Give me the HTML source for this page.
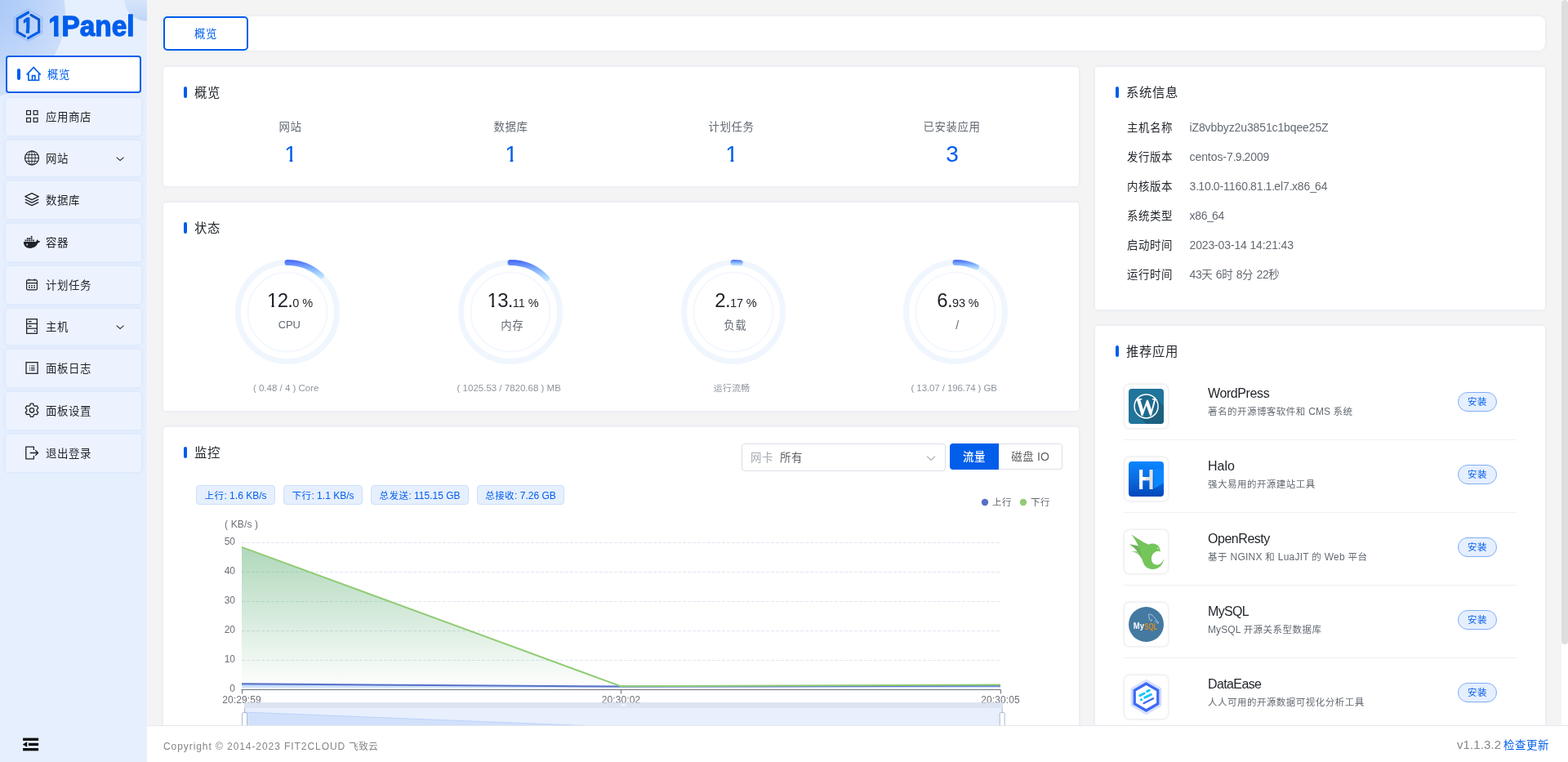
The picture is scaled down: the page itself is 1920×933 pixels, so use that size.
<!DOCTYPE html>
<html lang="zh-CN">
<head>
<meta charset="utf-8">
<title>1Panel</title>
<style>
*{box-sizing:border-box;margin:0;padding:0}
html,body{width:1920px;height:933px;overflow:hidden}
body{font-family:"Liberation Sans","Noto Sans CJK SC",sans-serif;font-size:14px;color:#1f2329;background:#f4f4f4;position:relative}
svg{display:block;overflow:visible}
.abs{position:absolute}
/* sidebar */
#side{position:absolute;left:0;top:0;width:180px;height:933px;background:#e6effd;overflow:hidden;will-change:transform}
#side .deco1{position:absolute;left:-126px;top:-86px;width:206px;height:206px;border-radius:50%;background:radial-gradient(circle at 50% 40%,#a3c4f7 0%,#b6d0f9 35%,#cfe0fb 75%,#d9e7fc 100%)}
#side .deco2{position:absolute;left:152px;top:-30px;width:56px;height:56px;border-radius:50%;background:linear-gradient(180deg,#e3edfd 30%,#bfd6f8 100%)}
#logo{position:absolute;left:0;top:0}
.mi{position:absolute;left:7px;width:166px;height:46px;border-radius:4px;background:#edf3fe;box-shadow:0 0 4px rgba(0,94,235,.10);color:#1f2329;font-size:14px}
.mi.sub{height:45px}
.mi .t{position:absolute;left:49px;top:0;line-height:46px;white-space:nowrap}
.mi.sub .t{line-height:45px}
.mi svg.ic{position:absolute;left:23px;top:13px;width:20px;height:20px}
.mi svg.arr{position:absolute;left:134px;top:17px;width:12px;height:12px}
.mi.act{background:#fff;border:2px solid #005eeb;color:#005eeb;box-shadow:none}
.mi.act .t{left:49px;line-height:42px}
.mi.act svg.ic{left:23px;top:11px}
.mi.act .bar{position:absolute;left:12px;top:14px;width:4px;height:14px;border-radius:2px;background:#005eeb}
/* cards */
.card{position:absolute;background:#fff;border-radius:4px;box-shadow:0 0 4px rgba(0,94,235,.10);will-change:transform}
.hd{position:absolute;left:38px;font-size:16px;line-height:22px;color:#1f2329;white-space:nowrap}
.hd:before{content:"";position:absolute;left:-13px;top:3px;width:4px;height:14px;border-radius:2px;background:#005eeb}
.c{position:absolute;white-space:nowrap;transform:translateX(-50%);text-align:center}
.l{position:absolute;white-space:nowrap}
.n1{display:inline-block;line-height:1;clip-path:polygon(0 -.5em,1em -.5em,1em .6em,.36em .6em,.36em 1.5em,.23em 1.5em,.23em .6em,0 .6em)}
.k{font-size:.96em;letter-spacing:.04em;vertical-align:.03em}
.g{color:#646a73}
.g2{color:#8f959e}
.b{color:#005eeb}
.f12{font-size:12px;line-height:16px}
.f14{font-size:14px;line-height:20px}
.f16{font-size:16px;line-height:22px}
#tabs{left:200px;top:20px;width:1692px;height:42px;border-radius:8px}
#tabs .tab{position:absolute;left:0;top:0;width:104px;height:42px;border:2px solid #005eeb;border-radius:5px;background:#fff;color:#005eeb;font-size:14px;line-height:38px;text-align:center}
.tag{position:absolute;top:71px;height:24px;border:1px solid #ccdffb;background:#e6effd;border-radius:4px;color:#005eeb;font-size:12px;line-height:24px;text-align:center;white-space:nowrap}
.sel{position:absolute;left:708px;top:20px;width:250px;height:34px;border:1px solid #dcdfe6;border-radius:4px;background:#fff}
.rb{position:absolute;top:20px;height:32px;font-size:14px;line-height:30px;text-align:center;white-space:nowrap}
.app{position:absolute;left:0;width:551px;height:89px}
.app .ib{position:absolute;left:36px;top:0.5px;width:53px;height:53.5px;border-radius:6px;background:#fff;box-shadow:0 0 3.5px rgba(31,35,41,.20)}
.app .ib svg{position:absolute;left:5px;top:5.5px;width:43px;height:43px}
.app .nm{position:absolute;left:138px;top:1px;font-size:16px;line-height:22px;white-space:nowrap;color:#1f2329}
.app .ds{position:absolute;left:138px;top:26px;font-size:12px;line-height:16px;white-space:nowrap;color:#646a73}
.app .bt{position:absolute;left:444px;top:10px;width:48px;height:24px;border-radius:12px;border:1px solid #80aef5;background:#e6effd;color:#005eeb;font-size:12px;line-height:22px;text-align:center}
.app .dv{position:absolute;left:35px;top:68px;width:481px;height:1px;background:#eef0f3}
#foot{will-change:transform;position:absolute;left:180px;top:888px;width:1740px;height:45px;background:#fff;border-top:1px solid #e4e7ed;font-size:13px;color:#858585}
#sbt{position:absolute;left:1912px;top:0;width:8px;height:888px;background:#fff}
#sb{position:absolute;left:1912px;top:0;width:8px;height:789px;background:#dddee0;border-radius:4px}
</style>
</head>
<body>

<div id="side">
  <div class="deco1"></div><div class="deco2"></div>
  <svg id="logo" width="180" height="62" viewBox="0 0 180 62">
    <polygon points="34.5,11.2 51.8,21.1 51.8,40.9 34.5,50.8 17.2,40.9 17.2,21.1" fill="none" stroke="#8db7f7" stroke-width="0.9"/>
    <polygon points="34.5,12.6 50.6,21.8 50.6,40.2 34.5,49.4 18.4,40.2 18.4,21.8" fill="none" stroke="#9cc1f8" stroke-width="0.6"/>
    <path d="M34.6 15.4 L21.2 23 L21.2 39 L30.4 44.3" fill="none" stroke="#0a59d8" stroke-width="3.1" stroke-linejoin="miter" stroke-linecap="round"/>
    <path d="M34.6 15.4 L24 21.4" fill="none" stroke="#0560e8" stroke-width="3.1" stroke-linecap="round"/>
    <path d="M38 18.4 L47.7 23.9 L47.7 39.1" fill="none" stroke="#0b56cc" stroke-width="3.1" stroke-linejoin="miter" stroke-linecap="round"/>
    <path d="M47.7 39.1 L34.5 46.7" fill="none" stroke="#0560e8" stroke-width="3.1" stroke-linecap="round"/>
    <mask id="lm1" maskUnits="userSpaceOnUse" x="0" y="0" width="180" height="62"><rect width="180" height="62" fill="#fff"/><rect x="24" y="35.5" width="7.75" height="8" fill="#000"/><rect x="36.05" y="35.5" width="8" height="8" fill="#000"/></mask>
    <mask id="lm2" maskUnits="userSpaceOnUse" x="0" y="0" width="180" height="62"><rect width="180" height="62" fill="#fff"/><rect x="57" y="38.8" width="9.05" height="8" fill="#000"/><rect x="71.65" y="38.8" width="5.2" height="8" fill="#000"/></mask>
    <text x="27.9" y="39.6" font-family="'Liberation Sans',sans-serif" font-weight="700" font-size="25.5" fill="#0560e6" stroke="#0560e6" stroke-width="1.5" stroke-linejoin="round" textLength="11.6" lengthAdjust="spacingAndGlyphs" mask="url(#lm1)">1</text>
    <text y="44.2" font-family="'Liberation Sans',sans-serif" font-weight="700" font-size="35" fill="#005eeb" stroke="#005eeb" stroke-width="1.3" stroke-linejoin="round" mask="url(#lm2)"><tspan x="59.55" textLength="17.11" lengthAdjust="spacingAndGlyphs">1</tspan><tspan x="75.62" textLength="88.89" lengthAdjust="spacingAndGlyphs">Panel</tspan></text>
  </svg>

  <div class="mi act" style="top:68px"><span class="bar"></span>
    <svg class="ic" viewBox="0 0 20 20" fill="none" stroke="#005eeb" stroke-width="1.6" stroke-linejoin="miter"><path d="M0.6 10.6 L9.2 1.4 L17.8 10.6"/><path d="M2.9 9 V17.2 H15.5 V9"/><path d="M7.5 17.2 V11.6 H10.9 V17.2"/></svg>
    <span class="t"><span class="k">概览</span></span></div>

  <div class="mi" style="top:120px">
    <svg class="ic" viewBox="0 0 20 20" fill="none" stroke="#1f2329" stroke-width="1.2"><rect x="2.6" y="2.5" width="4.8" height="4.8"/><rect x="11.2" y="2.5" width="4.8" height="4.8"/><rect x="2.6" y="11.5" width="4.8" height="4.8"/><rect x="11.2" y="11.5" width="4.8" height="4.8"/></svg>
    <span class="t"><span class="k">应用商店</span></span></div>

  <div class="mi sub" style="top:172px;height:44px">
    <svg class="ic" viewBox="0 0 20 20" fill="none" stroke="#1f2329" stroke-width="1.2"><circle cx="9" cy="8.4" r="8.5"/><ellipse cx="9" cy="8.4" rx="4.2" ry="8.5" stroke-width="0.9"/><path d="M9 0 V16.9 M0.6 8.4 H17.4 M1.9 4.4 H16.1 M1.9 12.4 H16.1" stroke-width="0.9"/></svg>
    <span class="t" style="line-height:44px"><span class="k">网站</span></span>
    <svg class="arr" viewBox="0 0 12 12" fill="none" stroke="#303133" stroke-width="1.1"><path d="M1.7 3.6 L6.1 7.5 L10.5 3.6"/></svg></div>

  <div class="mi" style="top:222px">
    <svg class="ic" viewBox="0 0 20 20" fill="none" stroke="#1f2329" stroke-width="1.3" stroke-linejoin="round"><path d="M9 1.6 L17.2 5.6 L9 9.6 L0.8 5.6 Z"/><path d="M0.8 9.2 L9 13.2 L17.2 9.2"/><path d="M0.8 12.6 L9 16.6 L17.2 12.6"/></svg>
    <span class="t"><span class="k">数据库</span></span></div>

  <div class="mi" style="top:274px">
    <svg class="ic" viewBox="0 0 20 20" fill="#1f2329" stroke="none"><path d="M-0.9 8.9 H14.3 C14.5 7.7 15 6.9 15.9 6.2 C16.5 6.8 16.8 7.5 16.9 8.2 C17.8 8 18.6 8.2 19.2 8.6 C18.8 9.6 17.9 10.2 16.6 10.3 C15.2 14 12 16.9 6.7 16.9 C2.4 16.9 -0.3 14.7 -1 10.8 C-1.1 10.1 -1.1 9.5 -0.9 8.9 Z"/><rect x="0.5" y="6.5" width="1.8" height="1.8"/><rect x="2.9" y="6.5" width="1.8" height="1.8"/><rect x="5.3" y="6.5" width="1.8" height="1.8"/><rect x="7.7" y="6.5" width="1.8" height="1.8"/><rect x="10.1" y="6.5" width="1.8" height="1.8"/><rect x="2.9" y="4.2" width="1.8" height="1.8"/><rect x="5.3" y="4.2" width="1.8" height="1.8"/><rect x="7.7" y="4.2" width="1.8" height="1.8"/><rect x="7.7" y="1.9" width="1.8" height="1.8"/><circle cx="3.2" cy="12.5" r="0.9" fill="#edf3fe"/></svg>
    <span class="t"><span class="k">容器</span></span></div>

  <div class="mi" style="top:326px">
    <svg class="ic" viewBox="0 0 20 20" fill="none" stroke="#1f2329" stroke-width="1.2"><rect x="2.6" y="3.8" width="12.8" height="12" rx="1.2"/><path d="M2.6 7.6 H15.4" stroke-width="1.3"/><path d="M5.6 2.4 V4.4 M12.4 2.4 V4.4" stroke-width="1.4"/><path d="M5 10.6 H6.8 M8.1 10.6 H9.9 M11.2 10.6 H13 M5 13 H6.8 M8.1 13 H9.9 M11.2 13 H13" stroke-width="1.4"/></svg>
    <span class="t"><span class="k">计划任务</span></span></div>

  <div class="mi sub" style="top:378px;height:44px">
    <svg class="ic" viewBox="0 0 20 20" fill="none" stroke="#1f2329" stroke-width="1.3"><rect x="2.65" y="-0.3" width="12.7" height="17.6"/><path d="M2.65 5.4 H15.35 M2.65 11.2 H15.35"/><path d="M5 2.6 H8.6 M5 8.3 H8.6" stroke-width="1.2"/><circle cx="12.6" cy="14.3" r="0.9" fill="#1f2329" stroke="none"/></svg>
    <span class="t" style="line-height:44px"><span class="k">主机</span></span>
    <svg class="arr" viewBox="0 0 12 12" fill="none" stroke="#303133" stroke-width="1.1"><path d="M1.7 3.6 L6.1 7.5 L10.5 3.6"/></svg></div>

  <div class="mi" style="top:428px">
    <svg class="ic" viewBox="0 0 20 20" fill="none" stroke="#1f2329" stroke-width="1.3"><rect x="2" y="2.7" width="14.1" height="13.6"/><path d="M8 7 H12.6 M8 9.6 H12.6 M8 12.2 H12.6" stroke-width="1.2"/><path d="M6 7 H7 M6 9.6 H7 M6 12.2 H7" stroke-width="1.2"/></svg>
    <span class="t"><span class="k">面板日志</span></span></div>

  <div class="mi" style="top:480px">
    <svg class="ic" viewBox="0 0 20 20" fill="none" stroke="#1f2329" stroke-width="1.3" stroke-linejoin="round"><path d="M7.4 1.2 H10.6 L11.3 3.5 L12.9 4.4 L15.2 3.9 L16.8 6.6 L15.2 8.4 V10.2 L16.8 12 L15.2 14.7 L12.9 14.2 L11.3 15.1 L10.6 17.4 H7.4 L6.7 15.1 L5.1 14.2 L2.8 14.7 L1.2 12 L2.8 10.2 V8.4 L1.2 6.6 L2.8 3.9 L5.1 4.4 L6.7 3.5 Z"/><circle cx="9" cy="9.3" r="2.7"/></svg>
    <span class="t"><span class="k">面板设置</span></span></div>

  <div class="mi" style="top:532px">
    <svg class="ic" viewBox="0 0 20 20" fill="none" stroke="#1f2329" stroke-width="1.3" stroke-linejoin="round"><path d="M11.4 6 V2.2 H1.8 V16.8 H11.4 V13"/><path d="M6.6 9.5 H16.4 M13.2 6.2 L16.6 9.5 L13.2 12.8"/></svg>
    <span class="t"><span class="k">退出登录</span></span></div>

  <svg class="abs" style="left:27px;top:902px" width="22" height="19" viewBox="0 0 22 19"><rect x="1.1" y="1.6" width="19" height="3.3" fill="#0a0a0a"/><rect x="7.9" y="7.8" width="12.2" height="3.3" fill="#0a0a0a"/><rect x="1.1" y="14" width="19" height="3.3" fill="#0a0a0a"/><path d="M0.7 9.5 L6.2 6.2 V12.8 Z" fill="#0a0a0a"/></svg>
</div>

<div class="card" id="tabs"><div class="tab"><span class="k">概览</span></div></div>
<div class="card" style="left:200px;top:82px;width:1121px;height:146px">
<div class="hd" style="top:21px"><span class="k">概览</span></div>
<div class="c g f14" style="left:155.5px;top:63px"><span class="k">网站</span></div>
<div class="c b" style="left:156.0px;top:91px;font-size:28px;line-height:32px"><span class="n1">1</span></div>
<div class="c g f14" style="left:425.5px;top:63px"><span class="k">数据库</span></div>
<div class="c b" style="left:426.0px;top:91px;font-size:28px;line-height:32px"><span class="n1">1</span></div>
<div class="c g f14" style="left:695.5px;top:63px"><span class="k">计划任务</span></div>
<div class="c b" style="left:696.0px;top:91px;font-size:28px;line-height:32px"><span class="n1">1</span></div>
<div class="c g f14" style="left:965.5px;top:63px"><span class="k">已安装应用</span></div>
<div class="c b" style="left:966.0px;top:91px;font-size:28px;line-height:32px">3</div>
</div>
<div class="card" style="left:200px;top:248px;width:1121px;height:255px">
<div class="hd" style="top:21px"><span class="k">状态</span></div>
<svg class="abs" style="left:0;top:0" width="1121" height="255" viewBox="0 0 1121 255"><defs><linearGradient id="gg0" gradientUnits="userSpaceOnUse" x1="0" y1="70.0" x2="0" y2="93.4"><stop offset="0" stop-color="#4261f6"/><stop offset="1" stop-color="#51c0ff" stop-opacity="0.25"/></linearGradient><linearGradient id="gg1" gradientUnits="userSpaceOnUse" x1="0" y1="70.0" x2="0" y2="96.4"><stop offset="0" stop-color="#4261f6"/><stop offset="1" stop-color="#51c0ff" stop-opacity="0.25"/></linearGradient><linearGradient id="gg2" gradientUnits="userSpaceOnUse" x1="0" y1="70.0" x2="0" y2="77.6"><stop offset="0" stop-color="#4261f6"/><stop offset="1" stop-color="#51c0ff" stop-opacity="0.25"/></linearGradient><linearGradient id="gg3" gradientUnits="userSpaceOnUse" x1="0" y1="70.0" x2="0" y2="82.6"><stop offset="0" stop-color="#4261f6"/><stop offset="1" stop-color="#51c0ff" stop-opacity="0.25"/></linearGradient></defs><circle cx="152" cy="134" r="60.5" fill="none" stroke="#f0f6fe" stroke-width="7"/><circle cx="152" cy="134" r="48.5" fill="#fff" stroke="#f4f8fe" stroke-width="2"/><path d="M152.00 73.50 A60.5 60.5 0 0 1 193.42 89.90" fill="none" stroke="url(#gg0)" stroke-width="7" stroke-linecap="round"/><circle cx="425" cy="134" r="60.5" fill="none" stroke="#f0f6fe" stroke-width="7"/><circle cx="425" cy="134" r="48.5" fill="#fff" stroke="#f4f8fe" stroke-width="2"/><path d="M425.00 73.50 A60.5 60.5 0 0 1 469.39 92.89" fill="none" stroke="url(#gg1)" stroke-width="7" stroke-linecap="round"/><circle cx="698" cy="134" r="60.5" fill="none" stroke="#f0f6fe" stroke-width="7"/><circle cx="698" cy="134" r="48.5" fill="#fff" stroke="#f4f8fe" stroke-width="2"/><path d="M698.00 73.50 A60.5 60.5 0 0 1 706.22 74.06" fill="none" stroke="url(#gg2)" stroke-width="7" stroke-linecap="round"/><circle cx="970" cy="134" r="60.5" fill="none" stroke="#f0f6fe" stroke-width="7"/><circle cx="970" cy="134" r="48.5" fill="#fff" stroke="#f4f8fe" stroke-width="2"/><path d="M970.00 73.50 A60.5 60.5 0 0 1 995.52 79.15" fill="none" stroke="url(#gg3)" stroke-width="7" stroke-linecap="round"/></svg>
<div class="c" style="left:155px;top:105px;line-height:30px;color:#1f2329"><span style="font-size:24px;letter-spacing:-0.7px"><span class="n1">1</span>2.</span><span style="font-size:14.5px;letter-spacing:-0.1px">0 %</span></div>
<div class="c g f14" style="left:154.3px;top:140px;letter-spacing:-0.15px;font-size:13px;">CPU</div>
<div class="c g2" style="left:150.2px;top:219px;font-size:11.5px;line-height:16px;">( 0.48 / 4 ) Core</div>
<div class="c" style="left:428px;top:105px;line-height:30px;color:#1f2329"><span style="font-size:24px;letter-spacing:-0.7px"><span class="n1">1</span>3.</span><span style="font-size:14.5px;letter-spacing:-0.1px">11 %</span></div>
<div class="c g f14" style="left:427.3px;top:140px;"><span class="k">内存</span></div>
<div class="c g2" style="left:423.2px;top:219px;font-size:11.5px;line-height:16px;">( 1025.53 / 7820.68 ) MB</div>
<div class="c" style="left:701px;top:105px;line-height:30px;color:#1f2329"><span style="font-size:24px;letter-spacing:-0.7px">2.</span><span style="font-size:14.5px;letter-spacing:-0.1px">17 %</span></div>
<div class="c g f14" style="left:700.3px;top:140px;"><span class="k">负载</span></div>
<div class="c g2" style="left:696.2px;top:219px;font-size:11.2px;line-height:16px;"><span class="k">运行流畅</span></div>
<div class="c" style="left:973px;top:105px;line-height:30px;color:#1f2329"><span style="font-size:24px;letter-spacing:-0.7px">6.</span><span style="font-size:14.5px;letter-spacing:-0.1px">93 %</span></div>
<div class="c g f14" style="left:972.3px;top:140px;">/</div>
<div class="c g2" style="left:968.2px;top:219px;font-size:11.5px;line-height:16px;letter-spacing:-0.1px;">( 13.07 / 196.74 ) GB</div>
</div>
<div class="card" style="left:200px;top:523px;width:1121px;height:420px">
<div class="hd" style="top:21px"><span class="k">监控</span></div>
<div class="sel"><span class="l" style="left:10px;top:6px;color:#a8abb2;font-size:14px;line-height:20px"><span class="k">网卡</span></span><span class="l" style="left:46px;top:6px;color:#606266;font-size:14px;line-height:20px"><span class="k">所有</span></span><svg class="abs" style="left:224px;top:10px" width="14" height="14" viewBox="0 0 14 14" fill="none" stroke="#a8abb2" stroke-width="1.1"><path d="M2 4.6 L7 9.4 L12 4.6"/></svg></div>
<div class="rb" style="left:963px;width:60px;background:#005eeb;color:#fff;border-radius:4px 0 0 4px;line-height:32px;font-weight:500"><span class="k">流量</span></div>
<div class="rb" style="left:1023px;width:78px;border:1px solid #dcdfe6;border-left:0;border-radius:0 4px 4px 0;color:#606266"><span class="k">磁盘</span> IO</div>
<div class="tag" style="left:40px;width:97px"><span class="k">上行</span>: 1.6 KB/s</div>
<div class="tag" style="left:147px;width:97px"><span class="k">下行</span>: 1.1 KB/s</div>
<div class="tag" style="left:254px;width:120px"><span class="k">总发送</span>: 115.15 GB</div>
<div class="tag" style="left:384px;width:107px"><span class="k">总接收</span>: 7.26 GB</div>
<svg class="abs" style="left:0;top:0" width="1121" height="420" viewBox="0 0 1121 420" font-family="'Liberation Sans','Noto Sans CJK SC',sans-serif" font-size="12"><defs><linearGradient id="ga" x1="0" y1="0" x2="0" y2="1"><stop offset="0" stop-color="#1b8f3c" stop-opacity="0.35"/><stop offset="1" stop-color="#1b8f3c" stop-opacity="0"/></linearGradient><linearGradient id="gb" x1="0" y1="0" x2="0" y2="1"><stop offset="0" stop-color="#005eeb" stop-opacity="0.35"/><stop offset="1" stop-color="#005eeb" stop-opacity="0"/></linearGradient></defs><circle cx="1006" cy="92" r="4.2" fill="#5470c6"/><text x="1015" y="96.29999999999995" fill="#646a73" font-size="11.5" letter-spacing="0.5">上行</text><circle cx="1053" cy="92" r="4.2" fill="#91cc75"/><text x="1062" y="96.29999999999995" fill="#646a73" font-size="11.5" letter-spacing="0.5">下行</text><text x="75" y="123" fill="#6e7079" letter-spacing="0.15">( KB/s )</text><text x="88" y="323.6" fill="#6e7079" text-anchor="end">0</text><text x="88" y="287.6" fill="#6e7079" text-anchor="end">10</text><path d="M96 285.5 H1025" stroke="#e0e6f1" stroke-width="1" stroke-dasharray="4 2" fill="none"/><text x="88" y="251.6" fill="#6e7079" text-anchor="end">20</text><path d="M96 249.5 H1025" stroke="#e0e6f1" stroke-width="1" stroke-dasharray="4 2" fill="none"/><text x="88" y="215.6" fill="#6e7079" text-anchor="end">30</text><path d="M96 213.5 H1025" stroke="#e0e6f1" stroke-width="1" stroke-dasharray="4 2" fill="none"/><text x="88" y="179.6" fill="#6e7079" text-anchor="end">40</text><path d="M96 177.5 H1025" stroke="#e0e6f1" stroke-width="1" stroke-dasharray="4 2" fill="none"/><text x="88" y="143.6" fill="#6e7079" text-anchor="end">50</text><path d="M96 141.5 H1025" stroke="#e0e6f1" stroke-width="1" stroke-dasharray="4 2" fill="none"/><path d="M96 146.90 L560.5 317.36 L1025 315.38 V321.5 H96 Z" fill="url(#ga)"/><path d="M96 314.30 L560.5 317.54 L1025 316.82 V321.5 H96 Z" fill="url(#gb)"/><path d="M96 314.30 L560.5 317.54 L1025 316.82" stroke="#5470c6" stroke-width="2" fill="none" stroke-linejoin="bevel"/><path d="M96 146.90 L560.5 317.36 L1025 315.38" stroke="#91cc75" stroke-width="2" fill="none" stroke-linejoin="bevel"/><path d="M95.5 321.5 H1025.5" stroke="#6e7079" stroke-width="1" fill="none"/><path d="M96.5 321.5 v5" stroke="#6e7079" stroke-width="1" fill="none"/><text x="96" y="338" fill="#6e7079" text-anchor="middle" letter-spacing="0.1">20:29:59</text><path d="M560.5 321.5 v5" stroke="#6e7079" stroke-width="1" fill="none"/><text x="560.5" y="338" fill="#6e7079" text-anchor="middle" letter-spacing="0.1">20:30:02</text><path d="M1025.5 321.5 v5" stroke="#6e7079" stroke-width="1" fill="none"/><text x="1025" y="338" fill="#6e7079" text-anchor="middle" letter-spacing="0.1">20:30:05</text><rect x="99" y="337" width="929" height="7" fill="#d2dbee" fill-opacity="0.75"/><rect x="99" y="344" width="928.5" height="30" fill="#e8effd"/><path d="M99 349 L564 367.4 L1027.5 367.20000000000005 V374 H99 Z" fill="#d2e1fb"/><path d="M99 349 L564 367.4" stroke="#b3cdfa" stroke-width="0.8" fill="none"/><path d="M561.5 339 v3 M563.5 339 v3 M565.5 339 v3" stroke="#fff" stroke-width="1" fill="none"/><rect x="96.5" y="349.5" width="6" height="20" rx="1.5" fill="#fff" stroke="#acb8d1" stroke-width="1"/><rect x="1024.2" y="349.5" width="6" height="20" rx="1.5" fill="#fff" stroke="#acb8d1" stroke-width="1"/><path d="M99.5 344 v6 M1027.2 344 v6" stroke="#acb8d1" stroke-width="1"/></svg>
</div>
<div class="card" style="left:1341px;top:82px;width:551px;height:297px">
<div class="hd" style="top:21px"><span class="k">系统信息</span></div>
<div class="l f14" style="left:39px;top:64px;color:#1f2329"><span class="k">主机名称</span></div><div class="l f14 g" style="left:115.5px;top:64px;letter-spacing:-0.12px;">iZ8vbbyz2u3851c1bqee25Z</div>
<div class="l f14" style="left:39px;top:100px;color:#1f2329"><span class="k">发行版本</span></div><div class="l f14 g" style="left:115.5px;top:100px;letter-spacing:-0.07px;">centos-7<span style="letter-spacing:-0.85px">.</span>9<span style="letter-spacing:-0.85px">.</span>2009</div>
<div class="l f14" style="left:39px;top:136px;color:#1f2329"><span class="k">内核版本</span></div><div class="l f14 g" style="left:115.5px;top:136px;letter-spacing:-0.06px;">3<span style="letter-spacing:-0.85px">.</span>10<span style="letter-spacing:-0.85px">.</span>0-1160<span style="letter-spacing:-0.85px">.</span>81<span style="letter-spacing:-0.85px">.</span>1<span style="letter-spacing:-0.85px">.</span>el7<span style="letter-spacing:-0.85px">.</span>x86<span style="letter-spacing:-2.1px">_</span>64</div>
<div class="l f14" style="left:39px;top:172px;color:#1f2329"><span class="k">系统类型</span></div><div class="l f14 g" style="left:115.5px;top:172px;letter-spacing:-0.25px;">x86<span style="letter-spacing:-2.1px">_</span>64</div>
<div class="l f14" style="left:39px;top:208px;color:#1f2329"><span class="k">启动时间</span></div><div class="l f14 g" style="left:115.5px;top:208px;letter-spacing:-0.14px;">2023-03-14 14:21:43</div>
<div class="l f14" style="left:39px;top:244px;color:#1f2329"><span class="k">运行时间</span></div><div class="l f14 g" style="left:115.5px;top:244px;letter-spacing:-0.4px;">43<span class="k">天</span> 6<span class="k">时</span> 8<span class="k">分</span> 22<span class="k">秒</span></div>
</div>
<div class="card" style="left:1341px;top:399px;width:551px;height:520px">
<div class="hd" style="top:21px"><span class="k">推荐应用</span></div>
<div class="app" style="top:71px"><div class="ib"><svg viewBox="0 0 43 43"><defs><clipPath id="wpc"><rect width="43" height="43" rx="4"/></clipPath><clipPath id="wpc2"><circle cx="21.6" cy="21.4" r="14.4"/></clipPath></defs><g clip-path="url(#wpc)"><rect width="43" height="43" fill="#21759b"/><path d="M32.3 10.6 L43 21.3 V43 H21.7 L10.9 32.2 Z" fill="#1b607f"/><circle cx="21.6" cy="21.4" r="14.5" fill="#1e6a8d" stroke="#fff" stroke-width="1.5"/><g clip-path="url(#wpc2)"><text x="21.4" y="33.2" text-anchor="middle" font-family="'Liberation Serif',serif" font-weight="700" font-size="31" fill="#fff" textLength="27" lengthAdjust="spacingAndGlyphs">W</text></g></g></svg></div><div class="nm" style="letter-spacing:-0.4px;">WordPress</div><div class="ds" style="letter-spacing:0.07px;"><span class="k">著名的开源博客软件和</span> CMS <span class="k">系统</span></div><div class="bt"><span class="k">安装</span></div><div class="dv"></div></div>
<div class="app" style="top:160px"><div class="ib"><svg viewBox="0 0 43 43"><defs><linearGradient id="hl" x1="0" y1="0" x2="0" y2="1"><stop offset="0" stop-color="#0a86ff"/><stop offset="0.45" stop-color="#0a6fe6"/><stop offset="1" stop-color="#0047b8"/></linearGradient><linearGradient id="hl2" x1="0" y1="0" x2="1" y2="0"><stop offset="0.5" stop-color="#fff"/><stop offset="0.5" stop-color="#e2e2e2"/></linearGradient><clipPath id="hlc"><rect width="43" height="43" rx="4"/></clipPath></defs><g clip-path="url(#hlc)"><rect width="43" height="43" fill="url(#hl)"/><path d="M31 9 H43 V26.5 L31 33.2 Z" fill="#0a86ff"/><text x="11.2" y="33.8" font-family="'Liberation Sans',sans-serif" font-weight="700" font-size="35" fill="url(#hl2)" textLength="20.2" lengthAdjust="spacingAndGlyphs">H</text></g></svg></div><div class="nm" style="">Halo</div><div class="ds" style=""><span class="k">强大易用的开源建站工具</span></div><div class="bt"><span class="k">安装</span></div><div class="dv"></div></div>
<div class="app" style="top:249px"><div class="ib"><svg viewBox="0 0 43 43"><path d="M2.6 21.4 C8 21.8 12 23.5 14.5 28 L17.5 31 L12.5 20.5 Z" fill="#8fd07a"/><path d="M0.7 12.3 C7 13 12 14.5 14.6 15.6 L20 27 L16.5 31 C14 25 9 17.5 0.7 12.3 Z" fill="#6db35a"/><path d="M3.4 0.2 C10 5 17 9.5 24.5 12.8 C27 11.4 30.5 11.2 33.6 12.4 C36.6 13.6 38.2 16.4 38.4 19.5 L39.2 21.8 L37 20.8 C32 20.6 27.9 25 27.9 30.2 C27.9 34.4 31 37.6 35 37.6 C38.6 37.6 41.4 34.8 42.8 30 C43 37 37 43 29.5 43 C22 43 18 37.5 16.6 31 C15.6 24 12.5 12 3.4 0.2 Z" fill="#74c55a"/><circle cx="35.8" cy="17.4" r="0.8" fill="#e6f6df"/></svg></div><div class="nm" style="letter-spacing:-0.46px;">OpenResty</div><div class="ds" style="letter-spacing:0.23px;"><span class="k">基于</span> NGINX <span class="k">和</span> LuaJIT <span class="k">的</span> Web <span class="k">平台</span></div><div class="bt"><span class="k">安装</span></div><div class="dv"></div></div>
<div class="app" style="top:338px"><div class="ib"><svg viewBox="0 0 43 43"><circle cx="21.5" cy="21.5" r="21.5" fill="#4479a1"/><text x="5.8" y="27.4" font-family="'Liberation Sans',sans-serif" font-weight="700" font-size="10" fill="#fff" textLength="13.2" lengthAdjust="spacingAndGlyphs">My</text><text x="19.6" y="27.5" font-family="'Liberation Sans',sans-serif" font-weight="700" font-size="10" fill="#e08b1a" textLength="15.6" lengthAdjust="spacingAndGlyphs">SQL</text><path d="M24.6 9 C27.5 8.6 31 11.5 33 15.5 L36.4 18.6 L35.8 20.6 C34.6 18.6 33.2 17.6 31.8 17.6 M24.6 9 C24.4 11.5 25.4 14 26.2 16.4 L27.6 17.6 L28.6 15" fill="none" stroke="#c9dbe8" stroke-width="0.8" stroke-linejoin="round"/></svg></div><div class="nm" style="letter-spacing:-0.68px;">MySQL</div><div class="ds" style="letter-spacing:0.12px;">MySQL <span class="k">开源关系型数据库</span></div><div class="bt"><span class="k">安装</span></div><div class="dv"></div></div>
<div class="app" style="top:427px"><div class="ib"><svg viewBox="0 0 43 43"><polygon points="21.5,0.3 39.9,10.9 39.9,32.1 21.5,42.7 3.1,32.1 3.1,10.9" fill="none" stroke="#b7c8fc" stroke-width="0.7"/><polygon points="21.5,1.8 38.6,11.65 38.6,31.35 21.5,41.2 4.4,31.35 4.4,11.65" fill="none" stroke="#a3b8fb" stroke-width="0.7"/><polygon points="21.5,5 35.8,13.25 35.8,29.75 21.5,38 7.2,29.75 7.2,13.25" fill="none" stroke="#3d6af5" stroke-width="3.4"/><g fill="none" stroke-linecap="round" stroke-width="3"><path d="M22.6 14.6 L25.4 13.2" stroke="#1fc4f9"/><path d="M13.8 19.6 L19.2 17" stroke="#1fc4f9"/><path d="M19.8 22.2 L27.4 18.4" stroke="#1fc4f9"/><path d="M15.3 24.8 L15.6 24.65" stroke="#1fc4f9"/><path d="M18.6 29 L30 23.3" stroke="#3d6af5" stroke-width="2.4"/></g></svg></div><div class="nm" style="letter-spacing:-0.61px;">DataEase</div><div class="ds" style=""><span class="k">人人可用的开源数据可视化分析工具</span></div><div class="bt"><span class="k">安装</span></div></div>
</div>
<div id="foot"><div class="l" style="left:20px;top:16px;font-size:12px;line-height:18px;letter-spacing:0.93px">Copyright © 2014-2023 FIT2CLOUD <span style="letter-spacing:0"><span class="k">飞致云</span></span></div><div class="l" style="left:1604px;top:12.5px;font-size:15px;line-height:20px;letter-spacing:0.1px">v1.1.3.2</div><div class="l b" style="left:1661px;top:13px;font-size:14px;line-height:20px;"><span class="k">检查更新</span></div></div>
<div id="sbt"></div><div id="sb"></div>
</body>
</html>
